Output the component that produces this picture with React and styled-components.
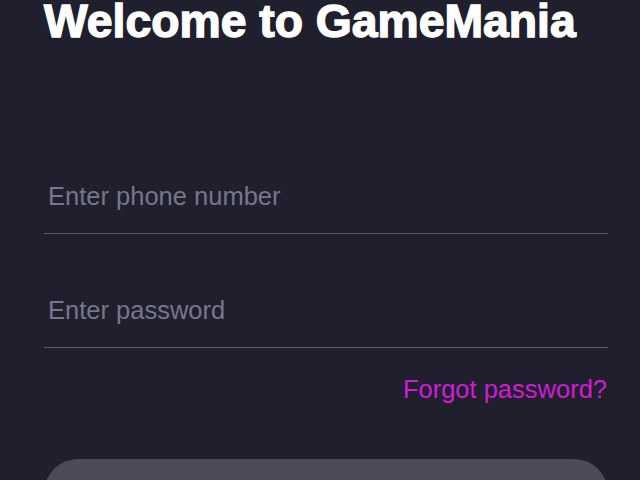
import React from "react";
import styled, { createGlobalStyle } from "styled-components";

const Global = createGlobalStyle`
  html, body {
    margin: 0;
    padding: 0;
    background: #201f2d;
  }
  body {
    font-family: "Liberation Sans", Arial, sans-serif;
    overflow: hidden;
  }
`;

const Page = styled.main`
  display: flex;
  flex-direction: column;
  width: 564px;
  padding: 1px 0 0 44px;
`;

const Title = styled.h1`
  margin: 0 0 126px;
  font-size: 46.3px;
  line-height: 41px;
  font-weight: 900;
  color: #ffffff;
  -webkit-text-stroke: 1.4px #ffffff;
  white-space: nowrap;
`;

const Input = styled.input`
  display: block;
  margin: 0 0 ${(p) => p.$gap}px;
  padding: 13px 4px 22px;
  line-height: 30px;
  height: 30px;
  font-family: "Liberation Sans", Arial, sans-serif;
  font-size: 25.5px;
  color: #ffffff;
  background: transparent;
  border: none;
  border-bottom: 1px solid #5a5a6c;
  outline: none;
  &::placeholder {
    color: #77768a;
  }
`;

const LinkRow = styled.div`
  display: flex;
  justify-content: flex-end;
  padding-right: 1px;
  margin: 0 0 54px;
`;

const Forgot = styled.a`
  font-size: 25.5px;
  line-height: 32px;
  color: #d21bd6;
  text-decoration: none;
  cursor: pointer;
`;

const Button = styled.button`
  height: 84px;
  border: none;
  border-radius: 34px;
  background: #4c4b5a;
  color: #ffffff;
  font-family: "Liberation Sans", Arial, sans-serif;
  font-size: 25.5px;
  font-weight: 700;
`;

export default function App() {
  return (
    <>
      <Global />
      <Page>
        <Title>Welcome to GameMania</Title>
        <Input type="tel" placeholder="Enter phone number" $gap={48} />
        <Input type="password" placeholder="Enter password" $gap={25} />
        <LinkRow>
          <Forgot>Forgot password?</Forgot>
        </LinkRow>
        <Button>Login</Button>
      </Page>
    </>
  );
}
